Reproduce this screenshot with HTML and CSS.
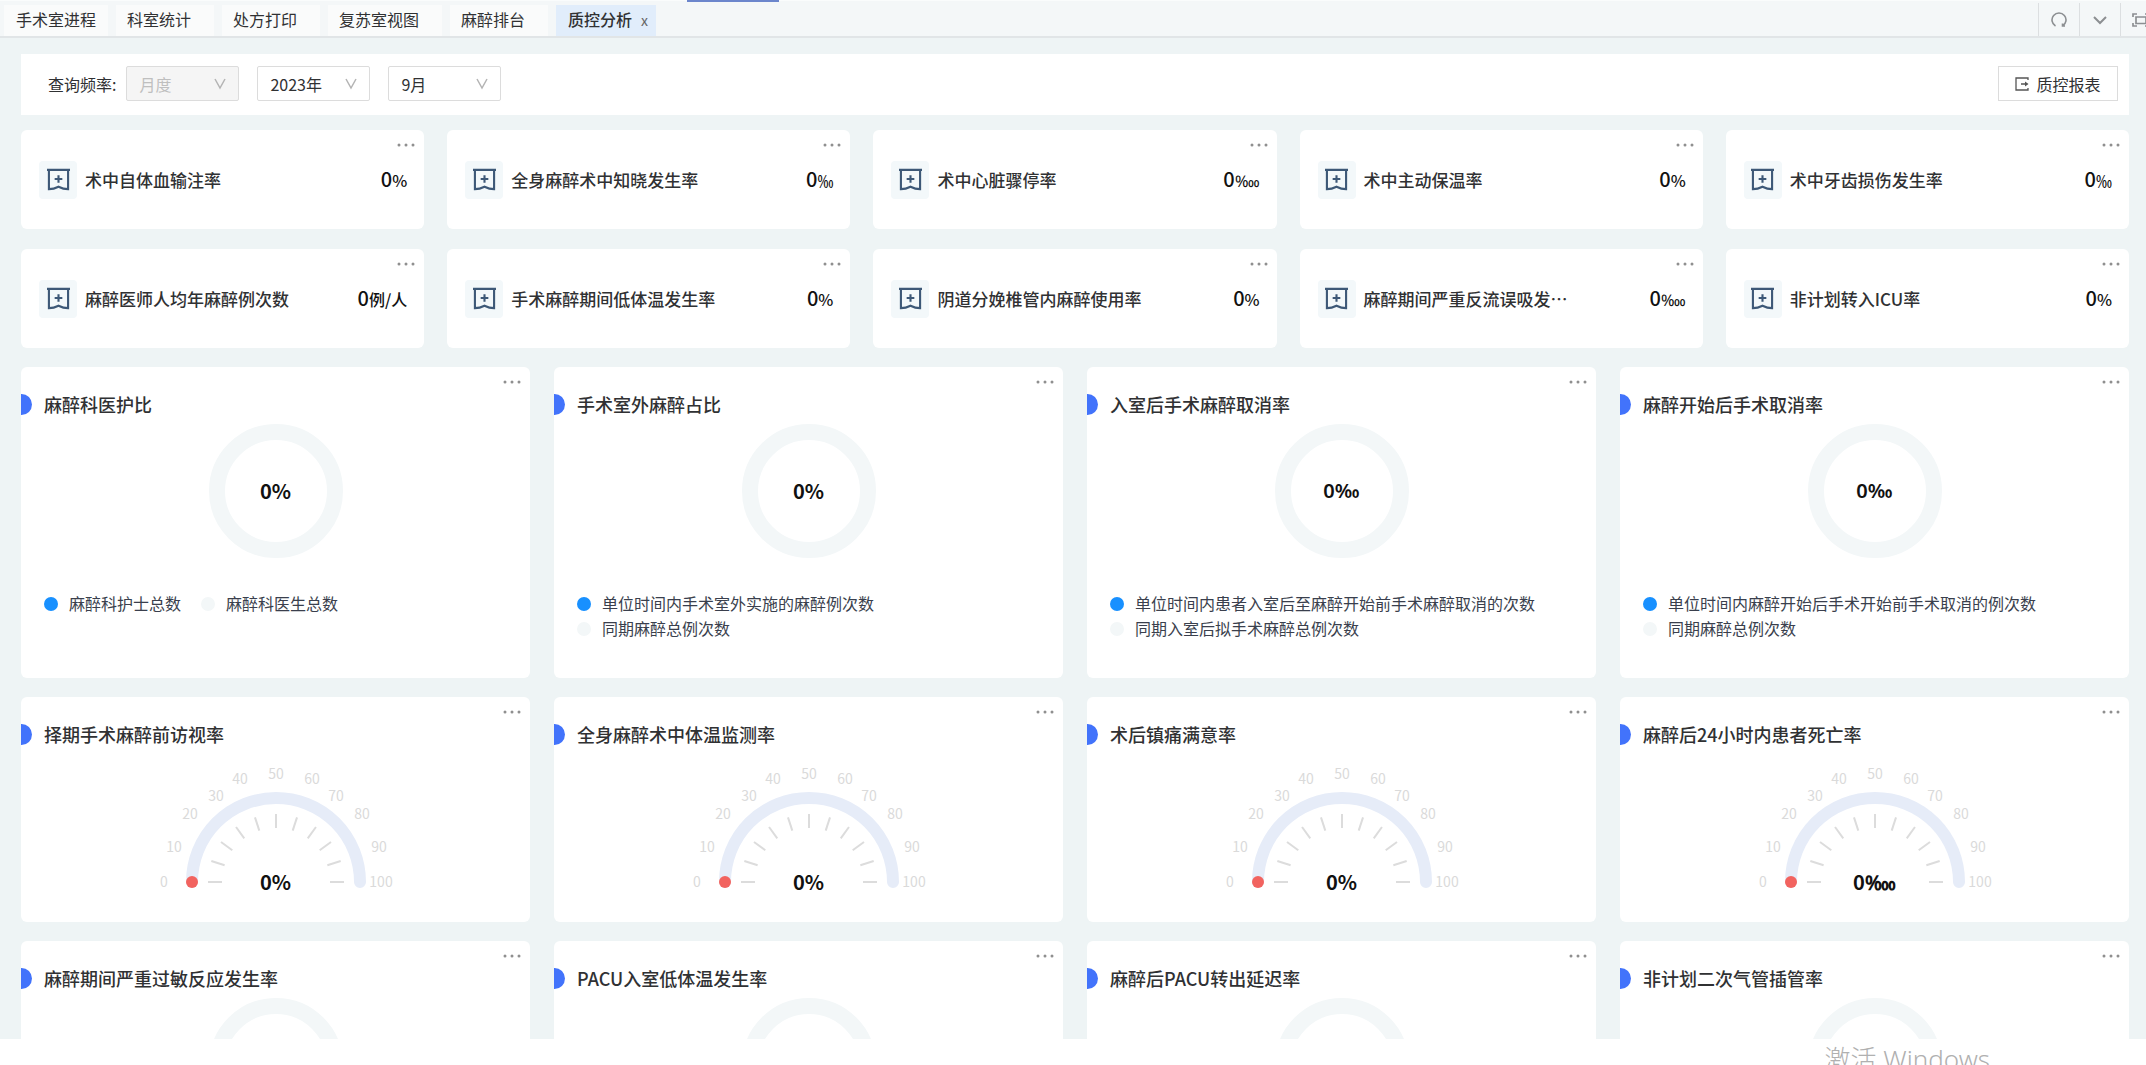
FILE: index.html
```
<!DOCTYPE html>
<html lang="zh-CN">
<head>
<meta charset="utf-8">
<title>质控分析</title>
<link rel="stylesheet" href="styles.css">
</head>
<body>
<svg class="defs" aria-hidden="true">
  <symbol id="stat" viewBox="0 0 24 24"><path d="M0 2H24M2 2V22Q7 22 12 19.500Q17 22 22 22V2M8 11.500H16M12 7.500V15.500" fill="none" stroke="#3d5877" stroke-width="2.200"/></symbol>
  <symbol id="down" viewBox="0 0 12 12"><path d="M1 1L6 10L11 1" fill="none" stroke="currentColor" stroke-width="1.500"/></symbol>
  <symbol id="dots" viewBox="0 0 18 4"><circle cx="2" cy="2" r="1.500"/><circle cx="9" cy="2" r="1.500"/><circle cx="16" cy="2" r="1.500"/></symbol>
  <symbol id="ring" viewBox="0 0 134 134"><circle cx="67" cy="67" r="59" fill="none" stroke="#f3f7f8" stroke-width="16"/></symbol>
  <symbol id="dial" viewBox="0 0 250 126">
    <path d="M41 114A84 84 0 0 1 209 114" fill="none" stroke="#e6ecf8" stroke-width="12" stroke-linecap="round"/>
    <g stroke="#dcdcdc" stroke-width="2">
      <path id="tick" d="M57 114H71"/>
      <use href="#tick" transform="rotate(18 125 114)"/><use href="#tick" transform="rotate(36 125 114)"/><use href="#tick" transform="rotate(54 125 114)"/><use href="#tick" transform="rotate(72 125 114)"/><use href="#tick" transform="rotate(90 125 114)"/><use href="#tick" transform="rotate(108 125 114)"/><use href="#tick" transform="rotate(126 125 114)"/><use href="#tick" transform="rotate(144 125 114)"/><use href="#tick" transform="rotate(162 125 114)"/><use href="#tick" transform="rotate(180 125 114)"/>
    </g>
    <circle cx="41" cy="114" r="6" fill="#f2635f"/>
  </symbol>
</svg>

<header class="tabbar">
  <div class="progress"></div>
  <nav class="tabs">
    <a class="tab first" href="#">手术室进程</a>
    <a class="tab" href="#">科室统计</a>
    <a class="tab" href="#">处方打印</a>
    <a class="tab" href="#">复苏室视图</a>
    <a class="tab" href="#">麻醉排台</a>
    <a class="tab active" href="#">质控分析<span class="close">x</span></a>
  </nav>
  <div class="tools">
    <button class="tool" aria-label="刷新"><svg width="16" height="16" viewBox="0 0 16 16"><path d="M4.500 14A7 7 0 1 1 11.500 14M11.500 11.500V14H14" fill="none" stroke="currentColor" stroke-width="1.600"/></svg></button>
    <button class="tool" aria-label="更多"><svg width="14" height="16" viewBox="0 0 14 16"><path d="M1 5L7 11L13 5" fill="none" stroke="currentColor" stroke-width="2"/></svg></button>
    <button class="tool" aria-label="全屏"><svg width="18" height="16" viewBox="0 0 18 16"><path d="M1 5V2H5M13 2H17V5M17 11V14H13M5 14H1V11M4 5H14V11.500H4Z" fill="none" stroke="currentColor" stroke-width="1.700"/></svg></button>
  </div>
</header>

<main class="content">
  <form class="filters">
    <label class="field-label" for="freq">查询频率:</label>
    <span class="select"><select id="freq" disabled><option>月度</option></select><svg><use href="#down"/></svg></span>
    <span class="select"><select aria-label="年份"><option>2023年</option></select><svg><use href="#down"/></svg></span>
    <span class="select"><select aria-label="月份"><option>9月</option></select><svg><use href="#down"/></svg></span>
    <button class="report" type="button"><svg width="14" height="14" viewBox="0 0 14 14"><path d="M13 3V1H1V13H13V11M6 7H11" fill="none" stroke="#555" stroke-width="1.300"/><path d="M10 4.500L13.500 7L10 9.500Z" fill="#555"/></svg>质控报表</button>
  </form>

  <section class="stats">
    <article class="stat"><button class="more" aria-label="更多"><svg><use href="#dots"/></svg></button><span class="badge"><svg><use href="#stat"/></svg></span><h3>术中自体血输注率</h3><p><b>0</b>%</p></article>
    <article class="stat"><button class="more" aria-label="更多"><svg><use href="#dots"/></svg></button><span class="badge"><svg><use href="#stat"/></svg></span><h3>全身麻醉术中知晓发生率</h3><p><b>0</b>‰</p></article>
    <article class="stat"><button class="more" aria-label="更多"><svg><use href="#dots"/></svg></button><span class="badge"><svg><use href="#stat"/></svg></span><h3>术中心脏骤停率</h3><p><b>0</b>‱</p></article>
    <article class="stat"><button class="more" aria-label="更多"><svg><use href="#dots"/></svg></button><span class="badge"><svg><use href="#stat"/></svg></span><h3>术中主动保温率</h3><p><b>0</b>%</p></article>
    <article class="stat"><button class="more" aria-label="更多"><svg><use href="#dots"/></svg></button><span class="badge"><svg><use href="#stat"/></svg></span><h3>术中牙齿损伤发生率</h3><p><b>0</b>‰</p></article>
    <article class="stat"><button class="more" aria-label="更多"><svg><use href="#dots"/></svg></button><span class="badge"><svg><use href="#stat"/></svg></span><h3>麻醉医师人均年麻醉例次数</h3><p><b>0</b>例/人</p></article>
    <article class="stat"><button class="more" aria-label="更多"><svg><use href="#dots"/></svg></button><span class="badge"><svg><use href="#stat"/></svg></span><h3>手术麻醉期间低体温发生率</h3><p><b>0</b>%</p></article>
    <article class="stat"><button class="more" aria-label="更多"><svg><use href="#dots"/></svg></button><span class="badge"><svg><use href="#stat"/></svg></span><h3>阴道分娩椎管内麻醉使用率</h3><p><b>0</b>%</p></article>
    <article class="stat"><button class="more" aria-label="更多"><svg><use href="#dots"/></svg></button><span class="badge"><svg><use href="#stat"/></svg></span><h3>麻醉期间严重反流误吸发…</h3><p><b>0</b>‱</p></article>
    <article class="stat"><button class="more" aria-label="更多"><svg><use href="#dots"/></svg></button><span class="badge"><svg><use href="#stat"/></svg></span><h3>非计划转入ICU率</h3><p><b>0</b>%</p></article>
  </section>

  <section class="charts">
    <article class="card"><button class="more" aria-label="更多"><svg><use href="#dots"/></svg></button><h2>麻醉科医护比</h2>
      <div class="donut"><svg><use href="#ring"/></svg><strong>0%</strong></div>
      <ul class="legend"><li class="on">麻醉科护士总数</li><li>麻醉科医生总数</li></ul></article>
    <article class="card"><button class="more" aria-label="更多"><svg><use href="#dots"/></svg></button><h2>手术室外麻醉占比</h2>
      <div class="donut"><svg><use href="#ring"/></svg><strong>0%</strong></div>
      <ul class="legend"><li class="on">单位时间内手术室外实施的麻醉例次数</li><li>同期麻醉总例次数</li></ul></article>
    <article class="card"><button class="more" aria-label="更多"><svg><use href="#dots"/></svg></button><h2>入室后手术麻醉取消率</h2>
      <div class="donut"><svg><use href="#ring"/></svg><strong class="permille">0‰</strong></div>
      <ul class="legend"><li class="on">单位时间内患者入室后至麻醉开始前手术麻醉取消的次数</li><li>同期入室后拟手术麻醉总例次数</li></ul></article>
    <article class="card"><button class="more" aria-label="更多"><svg><use href="#dots"/></svg></button><h2>麻醉开始后手术取消率</h2>
      <div class="donut"><svg><use href="#ring"/></svg><strong class="permille">0‰</strong></div>
      <ul class="legend"><li class="on">单位时间内麻醉开始后手术开始前手术取消的例次数</li><li>同期麻醉总例次数</li></ul></article>
  </section>

  <section class="charts">
    <article class="card short"><button class="more" aria-label="更多"><svg><use href="#dots"/></svg></button><h2>择期手术麻醉前访视率</h2>
      <div class="gauge"><svg viewBox="0 0 250 126"><use href="#dial"/><text x="13" y="119">0</text><text x="23" y="84">10</text><text x="39" y="51">20</text><text x="65" y="33">30</text><text x="89" y="16">40</text><text x="125" y="11">50</text><text x="161" y="16">60</text><text x="185" y="33">70</text><text x="211" y="51">80</text><text x="228" y="84">90</text><text x="230" y="119">100</text></svg><strong>0%</strong></div></article>
    <article class="card short"><button class="more" aria-label="更多"><svg><use href="#dots"/></svg></button><h2>全身麻醉术中体温监测率</h2>
      <div class="gauge"><svg viewBox="0 0 250 126"><use href="#dial"/><text x="13" y="119">0</text><text x="23" y="84">10</text><text x="39" y="51">20</text><text x="65" y="33">30</text><text x="89" y="16">40</text><text x="125" y="11">50</text><text x="161" y="16">60</text><text x="185" y="33">70</text><text x="211" y="51">80</text><text x="228" y="84">90</text><text x="230" y="119">100</text></svg><strong>0%</strong></div></article>
    <article class="card short"><button class="more" aria-label="更多"><svg><use href="#dots"/></svg></button><h2>术后镇痛满意率</h2>
      <div class="gauge"><svg viewBox="0 0 250 126"><use href="#dial"/><text x="13" y="119">0</text><text x="23" y="84">10</text><text x="39" y="51">20</text><text x="65" y="33">30</text><text x="89" y="16">40</text><text x="125" y="11">50</text><text x="161" y="16">60</text><text x="185" y="33">70</text><text x="211" y="51">80</text><text x="228" y="84">90</text><text x="230" y="119">100</text></svg><strong>0%</strong></div></article>
    <article class="card short"><button class="more" aria-label="更多"><svg><use href="#dots"/></svg></button><h2>麻醉后24小时内患者死亡率</h2>
      <div class="gauge"><svg viewBox="0 0 250 126"><use href="#dial"/><text x="13" y="119">0</text><text x="23" y="84">10</text><text x="39" y="51">20</text><text x="65" y="33">30</text><text x="89" y="16">40</text><text x="125" y="11">50</text><text x="161" y="16">60</text><text x="185" y="33">70</text><text x="211" y="51">80</text><text x="228" y="84">90</text><text x="230" y="119">100</text></svg><strong>0‱</strong></div></article>
  </section>

  <section class="charts">
    <article class="card"><button class="more" aria-label="更多"><svg><use href="#dots"/></svg></button><h2>麻醉期间严重过敏反应发生率</h2><div class="donut"><svg><use href="#ring"/></svg></div></article>
    <article class="card"><button class="more" aria-label="更多"><svg><use href="#dots"/></svg></button><h2>PACU入室低体温发生率</h2><div class="donut"><svg><use href="#ring"/></svg></div></article>
    <article class="card"><button class="more" aria-label="更多"><svg><use href="#dots"/></svg></button><h2>麻醉后PACU转出延迟率</h2><div class="donut"><svg><use href="#ring"/></svg></div></article>
    <article class="card"><button class="more" aria-label="更多"><svg><use href="#dots"/></svg></button><h2>非计划二次气管插管率</h2><div class="donut"><svg><use href="#ring"/></svg></div></article>
  </section>
</main>

<footer class="activation">激活 Windows</footer>
</body>
</html>
```
FILE: styles.css
```
* { box-sizing: border-box; }

body {
  margin: 0;
  height: 100vh;
  display: flex;
  flex-direction: column;
  overflow: hidden;
  background: #fff;
  color: #303133;
  font: 16px/24px "Noto Sans CJK SC", sans-serif;
}

h2, h3, p, ul { margin: 0; padding: 0; }
button, select { font: inherit; color: inherit; }
.defs { position: absolute; width: 0; height: 0; }

/* Tab bar */
.tabbar {
  position: relative;
  flex: none;
  display: flex;
  justify-content: space-between;
  height: 38px;
  padding-left: 4px;
  background: #f4f7f8;
  border-top: 1px solid #fafcfc;
  border-bottom: 2px solid #e1e5e7;
}
.progress {
  position: absolute;
  top: -1px;
  left: 32%;
  width: 92px;
  height: 2px;
  background: #6c86cc;
}
.tabs { display: flex; gap: 8px; padding-top: 4px; }
.tab {
  height: 31px;
  padding: 0 23px 0 11px;
  line-height: 28px;
  background: #fafbfb;
  color: #303133;
  text-decoration: none;
}
.tab.first { padding: 0 12px; }
.tab.active { padding: 0 8px 0 12px; background: #e1edfb; font-weight: 500; }
.close { margin-left: 9px; font-size: 14px; font-weight: 400; color: #666; }

.tools { display: flex; margin-right: -15px; padding-top: 2px; }
.tool {
  display: grid;
  place-items: center;
  width: 41px;
  padding: 0;
  border: 0;
  border-left: 1px solid #dcdfe1;
  background: none;
  color: #8c8f92;
}

/* Page area */
.content {
  flex: 1;
  min-height: 0;
  overflow: hidden;
  display: flex;
  flex-direction: column;
  gap: 19px;
  padding: 16px 17px 0 21px;
  background: #eef4f5;
}

.filters {
  flex: none;
  display: flex;
  align-items: center;
  height: 61px;
  margin-bottom: -4px;
  padding: 0 11px 2px 27px;
  background: #fff;
}
.field-label { margin-right: 10px; }
.select { position: relative; margin-right: 18px; }
.select select {
  display: block;
  width: 113px;
  height: 35px;
  padding: 0 12px;
  appearance: none;
  border: 1px solid #dcdcdc;
  border-radius: 2px;
  background: #fff;
  opacity: 1;
}
.select select:disabled { background: #f5f5f5; color: #bfbfbf; }
.select svg {
  position: absolute;
  top: 12px;
  right: 13px;
  width: 12px;
  height: 12px;
  color: #b4b4b4;
  pointer-events: none;
}
.report {
  display: flex;
  align-items: center;
  justify-content: center;
  gap: 7px;
  width: 120px;
  height: 35px;
  margin-left: auto;
  padding: 0;
  border: 1px solid #dcdcdc;
  background: #fff;
}

/* Small figures */
.stats {
  flex: none;
  display: grid;
  grid-template-columns: repeat(5, 1fr);
  gap: 20px 23px;
}
.stat {
  position: relative;
  display: flex;
  align-items: center;
  height: 99px;
  padding: 0 17px 0 18px;
  border-radius: 6px;
  background: #fff;
}
.badge {
  display: grid;
  place-items: center;
  width: 38px;
  height: 38px;
  border-radius: 4px;
  background: #f3f8fa;
}
.badge svg { width: 23px; height: 23px; }
.stat h3 { margin-left: 8px; font-size: 17px; font-weight: 500; white-space: nowrap; }
.stat p { margin-left: auto; font-weight: 500; color: #111; white-space: nowrap; }
.stat b { font-size: 20px; font-weight: 500; }

.more {
  position: absolute;
  top: 12px;
  right: 8px;
  display: flex;
  padding: 1px;
  border: 0;
  background: none;
}
.more svg { width: 18px; height: 4px; fill: #8f8f8f; }

/* Chart cards */
.charts {
  flex: none;
  display: grid;
  grid-template-columns: repeat(4, 1fr);
  gap: 24px;
}
.card {
  position: relative;
  height: 311px;
  padding-top: 25px;
  border-radius: 6px;
  background: #fff;
}
.card.short { height: 225px; }
.card h2 {
  display: flex;
  align-items: center;
  gap: 12px;
  font-size: 18px;
  font-weight: 500;
}
.card h2::before {
  content: "";
  width: 11px;
  height: 21px;
  border-radius: 0 11px 11px 0;
  background: #4273fb;
}
.donut, .gauge { display: grid; justify-content: center; justify-items: center; }
.donut > *, .gauge > * { grid-area: 1 / 1; }
.donut { margin-top: 8px; align-items: center; }
.donut svg { width: 134px; height: 134px; }
.gauge { margin-top: 22px; align-items: end; }
.gauge svg { width: 250px; height: 126px; overflow: visible; }
.gauge text { font-size: 14px; fill: #dadada; text-anchor: middle; }
.donut strong, .gauge strong { font-size: 20px; font-weight: 700; color: #111; }
.donut .permille { font-family: "Noto Sans", "Noto Sans CJK SC", sans-serif; font-weight: 600; }

.legend {
  display: flex;
  flex-wrap: wrap;
  gap: 0 20px;
  margin-top: 33px;
  padding: 0 23px;
  list-style: none;
  line-height: 25px;
  color: #3a3f4d;
}
.legend li { display: flex; align-items: center; gap: 11px; }
.legend li::before {
  content: "";
  width: 14px;
  height: 14px;
  border-radius: 50%;
  background: #f3f7f8;
}
.legend .on::before { background: #1890ff; }

.activation {
  flex: none;
  height: 26px;
  padding-right: 156px;
  overflow: hidden;
  text-align: right;
  font-family: "Noto Sans", "Noto Sans CJK SC", sans-serif;
  font-size: 26px;
  font-weight: 300;
  line-height: 40px;
  color: #b0b0b0;
}
```
